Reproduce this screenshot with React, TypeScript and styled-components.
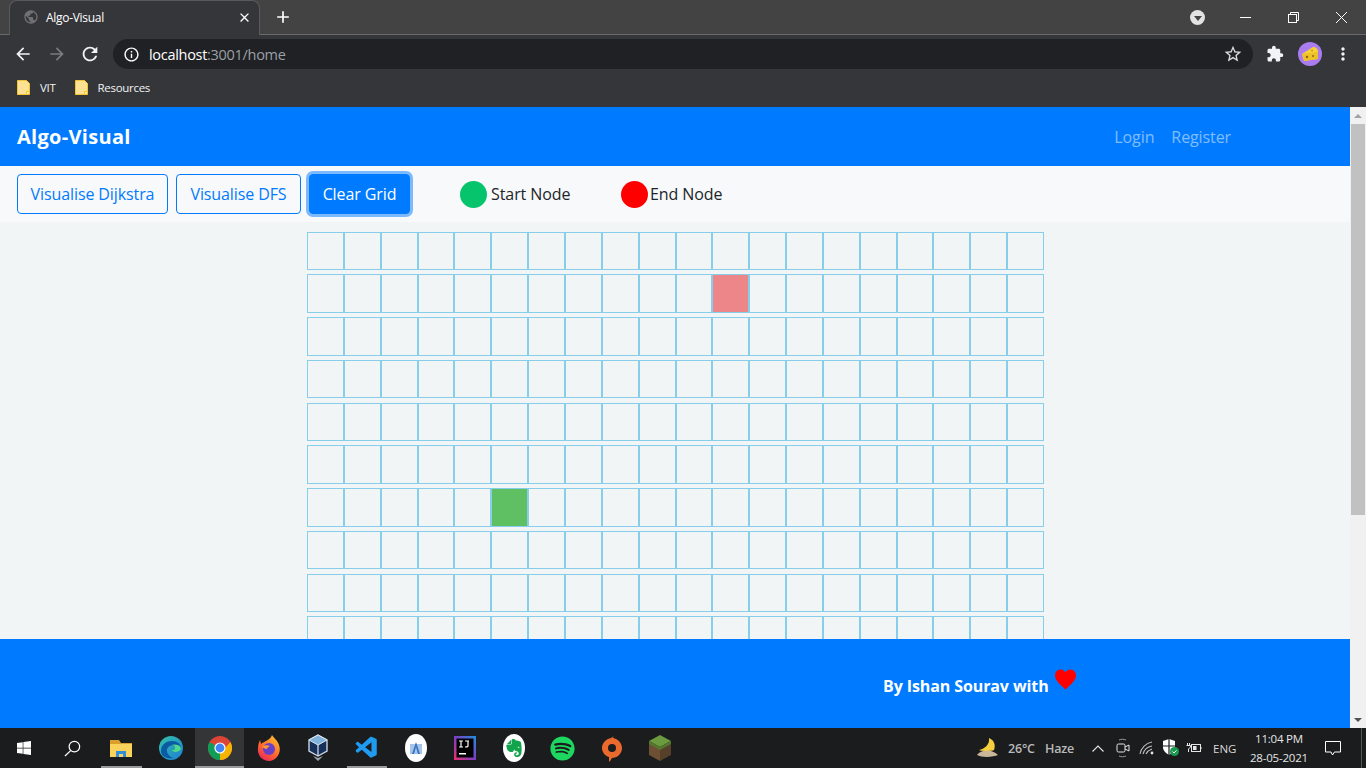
import React from "react";
import styled, { createGlobalStyle } from "styled-components";
import { MdAdd, MdArrowBack, MdArrowForward, MdClose, MdExtension, MdInfoOutline, MdMoreVert, MdPublic, MdRefresh, MdStarBorder } from "react-icons/md";
import { FaSpotify, FaWindows } from "react-icons/fa";
import { SiEvernote } from "react-icons/si";
import { VscVscode } from "react-icons/vsc";

const UI_FONT = `"Open Sans", "Noto Sans", sans-serif`;
const COLS = 20;
const ROWS = 10;
const START = { row: 6, col: 5 };
const END = { row: 1, col: 11 };

const GlobalStyle = createGlobalStyle`
   html, body {
      margin: 0;
      height: 100%;
      overflow: hidden;
      font-family: ${UI_FONT};
   }
   * {
      box-sizing: border-box;
   }
`;

const Screen = styled.div`
   display: flex;
   flex-direction: column;
   height: 100vh;
`;

/* browser chrome */
const TabStrip = styled.div`
   height: 35px;
   flex: none;
   display: flex;
   align-items: flex-end;
   padding-left: 9px;
   background: #434343;
   border-bottom: 1px solid #6b6b6b;
   color: #fff;
`;

const Tab = styled.div`
   width: 251px;
   height: 35px;
   margin-bottom: -1px;
   display: flex;
   align-items: center;
   padding: 0 7px 2px 13px;
   background: #35363a;
   border: 1px solid #5a5a5a;
   border-bottom: none;
   border-radius: 8px 8px 0 0;
   font-size: 12px;
   letter-spacing: -0.3px;
`;

const TabTitle = styled.span`
   flex: 1;
   margin-left: 7px;
`;

const NewTab = styled.div`
   width: 20px;
   height: 34px;
   margin-left: 13px;
   display: flex;
   align-items: center;
   justify-content: center;
   font-size: 20px;
`;

const WindowControls = styled.div`
   margin-left: auto;
   height: 34px;
   display: flex;
   align-items: center;
`;

const ProfileDrop = styled.div`
   width: 15px;
   height: 15px;
   margin-right: 16px;
   border-radius: 50%;
   background: #e3e3e3;
   display: flex;
   align-items: center;
   justify-content: center;

   &::after {
      content: "";
      margin-top: 2px;
      border: 4px solid transparent;
      border-top: 5px solid #444;
      border-bottom: none;
   }
`;

const WinButton = styled.div<{ $w?: number }>`
   width: ${(p) => p.$w || 48}px;
   height: 33px;
   display: flex;
   align-items: center;
   justify-content: center;
`;

const ToolBar = styled.div`
   height: 38px;
   flex: none;
   display: flex;
   align-items: center;
   background: #35363a;
   color: #fff;
`;

const NavIcon = styled.div<{ $w: number; $dim?: boolean }>`
   width: ${(p) => p.$w}px;
   height: 30px;
   flex: none;
   display: flex;
   align-items: center;
   justify-content: center;
   font-size: 20px;
   color: ${(p) => (p.$dim ? "#7b7c7f" : "#f1f3f4")};
`;

const Omnibox = styled.div`
   width: 1140px;
   height: 30px;
   flex: none;
   margin-left: 1px;
   display: flex;
   align-items: center;
   padding: 0 10px;
   background: #202124;
   border-radius: 15px;
   font-size: 14.5px;
   letter-spacing: -0.3px;
   color: #fff;
`;

const UrlHost = styled.span`
   margin-left: 9px;
`;

const UrlMuted = styled.span`
   color: #9aa0a6;
`;

const OmniSpacer = styled.div`
   flex: 1;
`;

const Avatar = styled.div`
   width: 24px;
   height: 24px;
   flex: none;
   margin: 0 7px 0 1px;
   border-radius: 50%;
   background: #a97cf0;
   display: flex;
   align-items: center;
   justify-content: center;
`;

const Bookmarks = styled.div`
   height: 34px;
   flex: none;
   display: flex;
   align-items: center;
   padding: 0 0 5px 17px;
   background: #35363a;
   color: #f1f3f4;
   font-size: 11.5px;
   letter-spacing: -0.3px;
`;

const Bookmark = styled.div`
   display: flex;
   align-items: center;
   margin-right: 19px;
`;

const BookmarkLabel = styled.span`
   margin-left: 10px;
`;

/* page */
const Viewport = styled.div`
   flex: 1;
   min-height: 0;
   display: flex;
`;

const Page = styled.div`
   flex: 1;
   min-width: 0;
   display: flex;
   flex-direction: column;
   background: #f1f5f6;
`;

const NavBar = styled.nav`
   height: 59px;
   flex: none;
   display: flex;
   align-items: center;
   padding: 0 119px 0 17px;
   background: #007bff;
`;

const Brand = styled.a`
   font-size: 20px;
   font-weight: 700;
   letter-spacing: 0.3px;
   color: #fff;
`;

const NavLinks = styled.div`
   margin-left: auto;
   display: flex;
   gap: 17px;
`;

const NavLink = styled.a`
   font-size: 16px;
   letter-spacing: -0.1px;
   color: rgba(255, 255, 255, 0.5);
`;

const SubNav = styled.div`
   height: 56px;
   flex: none;
   display: flex;
   align-items: center;
   padding-left: 17px;
   background: #f8f9fa;
`;

const Button = styled.button<{ $active?: boolean; $w: number }>`
   width: ${(p) => p.$w}px;
   height: 40px;
   margin-right: 8px;
   padding: 0;
   font-family: inherit;
   font-size: 16px;
   letter-spacing: -0.1px;
   border: 1px solid #007bff;
   border-radius: 4px;
   color: ${(p) => (p.$active ? "#fff" : "#007bff")};
   background: ${(p) => (p.$active ? "#007bff" : "transparent")};
   box-shadow: ${(p) => (p.$active ? "0 0 0 3px rgba(0, 123, 255, 0.5)" : "none")};
`;

const Legend = styled.div<{ $w: number; $gap: number; $ml?: number }>`
   width: ${(p) => p.$w}px;
   margin-left: ${(p) => p.$ml || 0}px;
   display: flex;
   align-items: center;
   gap: ${(p) => p.$gap}px;
   font-size: 16px;
   letter-spacing: -0.08px;
   color: #212529;
`;

const Dot = styled.span<{ $color: string }>`
   width: 27px;
   height: 27px;
   flex: none;
   border-radius: 50%;
   background: ${(p) => p.$color};
`;

const GridArea = styled.div`
   flex: 1;
   min-height: 0;
   overflow: hidden;
   padding: 9.6px 0 0 1px;
`;

const Grid = styled.div`
   display: grid;
   grid-template-columns: repeat(${COLS}, 36.85px);
   grid-auto-rows: 38.5px;
   row-gap: 4.25px;
   justify-content: center;
`;

const Cell = styled.div<{ $fill?: string }>`
   border: 1px solid #87ceeb;
   background: ${(p) => p.$fill || "transparent"};
`;

const Footer = styled.footer`
   height: 89px;
   flex: none;
   display: flex;
   align-items: center;
   padding: 4px 0 0 883px;
   background: #007bff;
   color: #fff;
   font-size: 16px;
   font-weight: 700;
   letter-spacing: -0.1px;
`;

const Heart = styled.svg`
   width: 21px;
   height: 21px;
   margin: 0 0 12px 6px;
`;

const ScrollBar = styled.div`
   width: 16px;
   flex: none;
   display: flex;
   flex-direction: column;
   align-items: center;
   background: #f1f1f1;
`;

const ScrollArrow = styled.div<{ $down?: boolean }>`
   height: 17px;
   flex: none;
   display: flex;
   align-items: center;
   justify-content: center;

   &::after {
      content: "";
      border: 4px solid transparent;
      ${(p) => (p.$down ? "border-top: 4px solid #505050; border-bottom: none;" : "border-bottom: 4px solid #a3a3a3; border-top: none;")}
   }
`;

const ScrollThumb = styled.div`
   width: 14px;
   height: 391px;
   flex: none;
   background: #c1c1c1;
`;

const ScrollRest = styled.div`
   flex: 1;
`;

/* taskbar */
const TaskBar = styled.div`
   height: 40px;
   flex: none;
   display: flex;
   align-items: center;
   background: #1a1c1e;
   color: #e6e6e6;
`;

const TaskItem = styled.div<{ $w?: number; $active?: boolean; $open?: boolean }>`
   position: relative;
   width: ${(p) => p.$w || 49}px;
   height: 40px;
   flex: none;
   display: flex;
   align-items: center;
   justify-content: center;
   background: ${(p) => (p.$active ? "#333537" : "transparent")};

   &::after {
      content: "";
      display: ${(p) => (p.$open ? "block" : "none")};
      position: absolute;
      left: ${(p) => (p.$active ? 0 : 5)}px;
      right: ${(p) => (p.$active ? 0 : 4)}px;
      bottom: 0;
      height: 2px;
      background: #9a9a9a;
   }
`;

const RoundBadge = styled.div`
   width: 22px;
   height: 28px;
   border-radius: 50%;
   background: #fff;
   display: flex;
   align-items: center;
   justify-content: center;
`;

const Tray = styled.div`
   margin-left: auto;
   display: flex;
   align-items: center;
   height: 40px;
`;

const TrayItem = styled.div<{ $w: number }>`
   width: ${(p) => p.$w}px;
   flex: none;
   display: flex;
   align-items: center;
   justify-content: center;
`;

const LangLabel = styled.div`
   width: 32px;
   flex: none;
   padding-left: 7px;
   font-size: 11.5px;
   color: #d8d8d8;
`;

const Clock = styled.div`
   width: 82px;
   flex: none;
   text-align: center;
   font-size: 11.5px;
   line-height: 19px;
   letter-spacing: -0.2px;
   color: #e6e6e6;
`;

const WeatherText = styled.span<{ $w: number }>`
   width: ${(p) => p.$w}px;
   flex: none;
   font-size: 12.5px;
   font-weight: 600;
   letter-spacing: -0.2px;
   color: #b9b9b9;
`;

const ShowDesktop = styled.div`
   width: 16px;
   height: 40px;
   margin-right: 4px;
   flex: none;
   border-right: 1px solid #555;
`;

const Folder = () => (
   <svg width="13" height="15" viewBox="0 0 13 15">
      <path d="M0.500 0.500h9l3 3v11h-12z" fill="#fde293" stroke="#f4c430" />
      <path d="M9.500 14.500v-3h3" fill="#fff1b8" stroke="#f4c430" />
   </svg>
);

const Cheese = () => (
   <svg width="18" height="16" viewBox="0 0 18 16">
      <path d="M1 8L12 1c3 0 5 2 5 5v7L3 15z" fill="#f7d038" />
      <path d="M1 8l16-2v7L3 15z" fill="#eec02a" />
      <circle cx="6" cy="11" r="1.2" fill="#8a6a12" />
      <circle cx="12" cy="10" r="1" fill="#8a6a12" />
      <circle cx="11" cy="4.5" r="1" fill="#c79b1c" />
   </svg>
);

const FileExplorer = () => (
   <svg width="22" height="22" viewBox="0 0 22 22">
      <path d="M0 3h9l2 3h11v14H0z" fill="#d9a02c" />
      <path d="M0 7h22v13H0z" fill="#fbd35c" />
      <path d="M6 20v-6h10v6h-3v-3H9v3z" fill="#2f8fd8" />
   </svg>
);

const Edge = () => (
   <svg width="24" height="24" viewBox="0 0 24 24">
      <defs>
         <linearGradient id="edgeA" x1="0" y1="0" x2="1" y2="1">
            <stop offset="0" stopColor="#34c1a6" />
            <stop offset="1" stopColor="#1d7ed6" />
         </linearGradient>
      </defs>
      <circle cx="12" cy="12" r="12" fill="url(#edgeA)" />
      <path d="M2 15C2 8 8 5 13 5c5 0 9 3 9 7 0 3-3 4-6 4-2 0-3-1-3-2 2 0 3-1 3-2 0-2-3-3-5-2-3 1-4 5-2 8 1 2 3 3 5 4C7 23 2 20 2 15z" fill="#0c59a4" />
      <path d="M22 12c0 3-3 4-6 4-2 0-3-1-3-2 2 0 3-1 3-2 0-2-2-3-4-3 3-1 9-1 10 3z" fill="#4ed88e" />
   </svg>
);

const Chrome = () => (
   <svg width="24" height="24" viewBox="0 0 24 24">
      <circle cx="12" cy="12" r="12" fill="#db4437" />
      <path d="M12 12L1.600 6A12 12 0 0 0 12 24l5-8z" fill="#0f9d58" />
      <path d="M12 12l5 0 5.400-6A12 12 0 0 1 12 24z" fill="#f4b400" />
      <circle cx="12" cy="12" r="5.6" fill="#fff" />
      <circle cx="12" cy="12" r="4.4" fill="#4285f4" />
   </svg>
);

const Firefox = () => (
   <svg width="24" height="26" viewBox="0 0 24 26">
      <defs>
         <linearGradient id="foxA" x1="0.8" y1="0" x2="0.2" y2="1">
            <stop offset="0" stopColor="#ffc02d" />
            <stop offset="0.55" stopColor="#ff6a2b" />
            <stop offset="1" stopColor="#e8235f" />
         </linearGradient>
      </defs>
      <path d="M3 5l1 4c2-2 4-2 5-3 3-2 5-3 6-6 2 3 6 6 7 10 3 8-3 16-10 16S0 20 1 13c0-3 1-6 2-8z" fill="url(#foxA)" />
      <circle cx="12" cy="14" r="6" fill="#6a3fc7" />
      <path d="M5 11c3-1 6-1 8 0-2 1-3 2-3 3-2 0-4-1-5-3z" fill="#ff9a2e" />
   </svg>
);

const VirtualBox = () => (
   <svg width="22" height="28" viewBox="0 0 22 28">
      <path d="M11 1l9 5v11l-9 5-9-5V6z" fill="#16305c" stroke="#c8d2e0" strokeWidth="1.4" />
      <path d="M11 1l9 5-9 5-9-5z" fill="#7fb2dc" stroke="#dfe6ee" strokeWidth="1" />
      <path d="M11 11v11" stroke="#dfe6ee" strokeWidth="1.2" />
      <path d="M6 22l5 5 5-5-5 2z" fill="#9aa3ad" />
   </svg>
);

const AndroidStudio = () => (
   <svg width="22" height="28" viewBox="0 0 22 28">
      <ellipse cx="11" cy="14" rx="11" ry="14" fill="#fff" />
      <path d="M7 20l4-12 4 12h-2l-2-7-2 7z" fill="#2f6db5" />
      <rect x="5" y="10" width="12" height="10" fill="#3c7fd0" opacity=".45" />
   </svg>
);

const IntelliJ = () => (
   <svg width="22" height="28" viewBox="0 0 22 28">
      <defs>
         <linearGradient id="ijA" x1="0" y1="1" x2="1" y2="0">
            <stop offset="0" stopColor="#ee2f6d" />
            <stop offset="0.5" stopColor="#7b3fc4" />
            <stop offset="1" stopColor="#1f8fe0" />
         </linearGradient>
      </defs>
      <rect x="0" y="2" width="22" height="24" fill="url(#ijA)" />
      <rect x="2.5" y="4.5" width="17" height="19" fill="#000" />
      <path d="M5 7h4M7 7v6M5 13h4M11 7h4M14 7v5c0 1-1 1-3 1" stroke="#fff" strokeWidth="1.2" fill="none" />
      <rect x="5" y="19" width="7" height="1.5" fill="#fff" />
   </svg>
);

const Origin = () => (
   <svg width="20" height="28" viewBox="0 0 20 28">
      <path d="M12 0c0 2-1 3-1 4 5 1 9 5 9 10 0 6-5 10-10 10-1 2-2 3-3 4 0-2 0-3 0-5-4-1-7-5-7-9 0-5 4-9 9-10 2-1 3-2 3-4z" fill="#ea6a2d" />
      <circle cx="10" cy="14" r="4" fill="#1a1c1e" />
   </svg>
);

const Grass = () => (
   <svg width="24" height="28" viewBox="0 0 24 28">
      <path d="M12 1l11 6-11 6L1 7z" fill="#6c9a3f" />
      <path d="M1 7l11 6v14L1 21z" fill="#6e4f33" />
      <path d="M23 7l-11 6v14l11-6z" fill="#56402a" />
      <path d="M1 7l11 6 11-6v3l-11 6-11-6z" fill="#54782f" />
   </svg>
);

const SearchGlass = () => (
   <svg width="17" height="17" viewBox="0 0 18 18" fill="none" stroke="#fff" strokeWidth="1.3">
      <circle cx="11" cy="7" r="5.6" />
      <path d="M7 11.200L1 17" />
   </svg>
);

const Moon = () => (
   <svg width="24" height="22" viewBox="0 0 24 22">
      <path d="M13 1c5 2 7 7 5 12-2 1-11 2-15 0 5-1 11-5 10-12z" fill="#f6cf3f" />
      <path d="M1 18c2-3 7-5 10-4 3-1 8 1 11 4-4 2-16 3-21 0z" fill="#c9b79a" />
   </svg>
);

const MeetNow = () => (
   <svg width="14" height="20" viewBox="0 0 14 20" fill="none" stroke="#e6e6e6" strokeWidth="1">
      <rect x="1" y="6" width="8" height="8" rx="1.5" />
      <path d="M9 9l4-2v6l-4-2" />
      <path d="M3 2c2-1 5-1 7 0M3 18c2 1 5 1 7 0" stroke="#999" />
   </svg>
);

const Wifi = () => (
   <svg width="16" height="14" viewBox="0 0 16 14" fill="none" stroke="#bdbdbd" strokeWidth="1.1">
      <path d="M1 13C2 7 7 2 13 1M4 13c1-4 4-7 9-8M7 13c1-2 3-4 6-5" />
      <circle cx="13" cy="12" r="1.4" fill="#e6e6e6" stroke="none" />
   </svg>
);

const Shield = () => (
   <svg width="18" height="18" viewBox="0 0 18 18">
      <path d="M7 0l6 2v6c0 4-3 6-6 8-3-2-6-4-6-8V2z" fill="#fff" />
      <path d="M7 0v16M1 7h12" stroke="#1a1c1e" strokeWidth="1.2" />
      <circle cx="12.5" cy="12.5" r="4.5" fill="#1a9a4e" />
      <path d="M10.500 12.500l1.500 1.500 2.500-2.500" stroke="#fff" strokeWidth="1" fill="none" />
   </svg>
);

const Battery = () => (
   <svg width="16" height="12" viewBox="0 0 16 12" fill="none" stroke="#e6e6e6" strokeWidth="1">
      <rect x="5.5" y="2.5" width="9" height="7" />
      <path d="M15 5v2" />
      <rect x="7" y="4" width="3.5" height="4" fill="#e6e6e6" stroke="none" />
      <path d="M1.500 1v2M3.500 1v2M0.500 3.500h4v1.500l-2 2v3" />
   </svg>
);

const Caret = () => (
   <svg width="12" height="7" viewBox="0 0 12 7" fill="none" stroke="#e6e6e6" strokeWidth="1.1">
      <path d="M0.500 6.500L6 1l5.500 5.500" />
   </svg>
);

const Notification = () => (
   <svg width="16" height="15" viewBox="0 0 16 15" fill="none" stroke="#fff" strokeWidth="1">
      <path d="M0.500 0.500h15v10.500H9.500L7.500 14 6 11H0.500z" />
   </svg>
);

const App = () => {
   const cells = [];
   for (let r = 0; r < ROWS; r++) {
      for (let c = 0; c < COLS; c++) {
         let fill;
         if (r === START.row && c === START.col) fill = "#5fc063";
         if (r === END.row && c === END.col) fill = "#ec8688";
         cells.push(<Cell key={`${r}-${c}`} $fill={fill} />);
      }
   }

   return (
      <Screen>
         <GlobalStyle />

         <TabStrip>
            <Tab>
               <MdPublic size={16} color="#6f7074" />
               <TabTitle>Algo-Visual</TabTitle>
               <MdClose size={15} />
            </Tab>
            <NewTab>
               <MdAdd />
            </NewTab>
            <WindowControls>
               <ProfileDrop />
               <WinButton>
                  <svg width="11" height="1"><rect width="11" height="1" fill="#fff" /></svg>
               </WinButton>
               <WinButton>
                  <svg width="11" height="11" viewBox="0 0 11 11" fill="none" stroke="#fff"><rect x="0.5" y="2.5" width="8" height="8" /><path d="M2.500 2.500v-2h8v8h-2" /></svg>
               </WinButton>
               <WinButton $w={49}>
                  <svg width="11" height="11" viewBox="0 0 11 11" stroke="#fff"><path d="M0 0l11 11M11 0L0 11" /></svg>
               </WinButton>
            </WindowControls>
         </TabStrip>

         <ToolBar>
            <NavIcon $w={46}><MdArrowBack /></NavIcon>
            <NavIcon $w={22} $dim><MdArrowForward /></NavIcon>
            <NavIcon $w={44}><MdRefresh size={22} /></NavIcon>
            <Omnibox>
               <MdInfoOutline size={17} />
               <UrlHost>localhost</UrlHost>
               <UrlMuted>:3001/home</UrlMuted>
               <OmniSpacer />
               <MdStarBorder size={20} color="#dadce0" />
            </Omnibox>
            <NavIcon $w={44}><MdExtension size={18} /></NavIcon>
            <Avatar><Cheese /></Avatar>
            <NavIcon $w={28}><MdMoreVert /></NavIcon>
         </ToolBar>

         <Bookmarks>
            <Bookmark>
               <Folder />
               <BookmarkLabel>VIT</BookmarkLabel>
            </Bookmark>
            <Bookmark>
               <Folder />
               <BookmarkLabel>Resources</BookmarkLabel>
            </Bookmark>
         </Bookmarks>

         <Viewport>
            <Page>
               <NavBar>
                  <Brand>Algo-Visual</Brand>
                  <NavLinks>
                     <NavLink>Login</NavLink>
                     <NavLink>Register</NavLink>
                  </NavLinks>
               </NavBar>

               <SubNav>
                  <Button $w={151}>Visualise Dijkstra</Button>
                  <Button $w={125}>Visualise DFS</Button>
                  <Button $w={101} $active>Clear Grid</Button>
                  <Legend $w={161} $gap={4} $ml={42}>
                     <Dot $color="#06c46b" />
                     Start Node
                  </Legend>
                  <Legend $w={110} $gap={2}>
                     <Dot $color="#ff0000" />
                     End Node
                  </Legend>
               </SubNav>

               <GridArea>
                  <Grid>{cells}</Grid>
               </GridArea>

               <Footer>
                  By Ishan Sourav with
                  <Heart viewBox="0 0 22 21">
                     <path d="M11 21C6 16 0 12 0 6c0-3 2.500-6 6-6 2.500 0 4 1.500 5 3 1-1.500 2.500-3 5-3 3.500 0 6 3 6 6 0 6-6 10-11 15z" fill="#ff0000" />
                  </Heart>
               </Footer>
            </Page>

            <ScrollBar>
               <ScrollArrow />
               <ScrollThumb />
               <ScrollRest />
               <ScrollArrow $down />
            </ScrollBar>
         </Viewport>

         <TaskBar>
            <TaskItem $w={48}><FaWindows size={16} color="#fff" /></TaskItem>
            <TaskItem $w={48}><SearchGlass /></TaskItem>
            <TaskItem $w={50} $open><FileExplorer /></TaskItem>
            <TaskItem><Edge /></TaskItem>
            <TaskItem $active $open><Chrome /></TaskItem>
            <TaskItem><Firefox /></TaskItem>
            <TaskItem><VirtualBox /></TaskItem>
            <TaskItem $open><VscVscode size={26} color="#1f9cf0" /></TaskItem>
            <TaskItem><AndroidStudio /></TaskItem>
            <TaskItem><IntelliJ /></TaskItem>
            <TaskItem><RoundBadge><SiEvernote size={18} color="#11a44c" /></RoundBadge></TaskItem>
            <TaskItem><FaSpotify size={25} color="#1ed760" /></TaskItem>
            <TaskItem><Origin /></TaskItem>
            <TaskItem $w={48}><Grass /></TaskItem>

            <Tray>
               <TrayItem $w={40}><Moon /></TrayItem>
               <WeatherText $w={37}>26°C</WeatherText>
               <WeatherText $w={39}>Haze</WeatherText>
               <TrayItem $w={28}><Caret /></TrayItem>
               <TrayItem $w={22}><MeetNow /></TrayItem>
               <TrayItem $w={26}><Wifi /></TrayItem>
               <TrayItem $w={22}><Shield /></TrayItem>
               <TrayItem $w={24}><Battery /></TrayItem>
               <LangLabel>ENG</LangLabel>
               <Clock>
                  11:04 PM
                  <br />
                  28-05-2021
               </Clock>
               <TrayItem $w={26}><Notification /></TrayItem>
               <ShowDesktop />
            </Tray>
         </TaskBar>
      </Screen>
   );
};

export default App;
